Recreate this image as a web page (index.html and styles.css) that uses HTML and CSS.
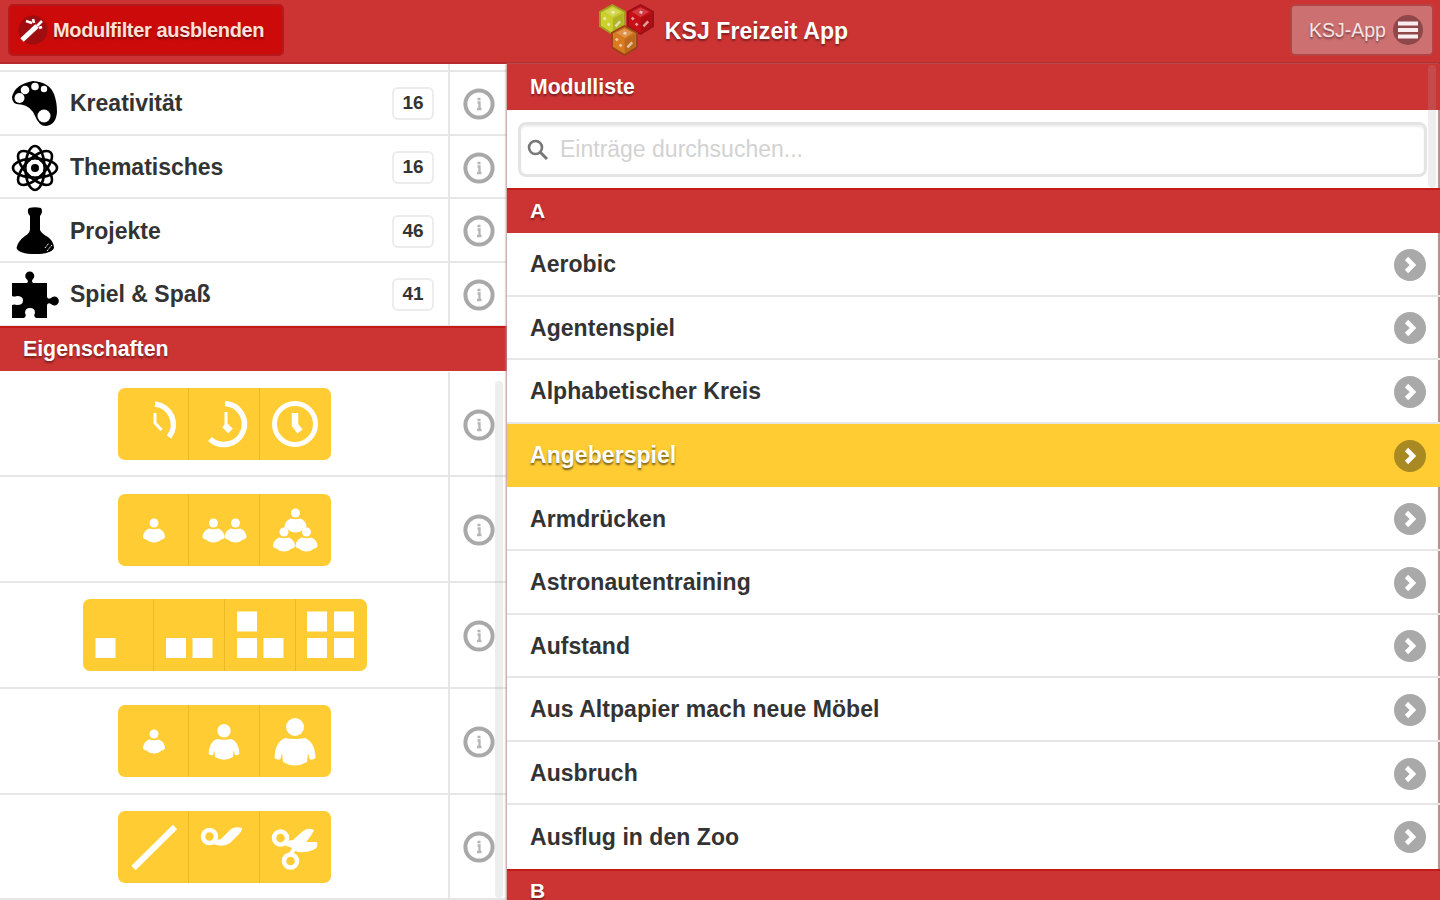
FILE: index.html
```html
<!DOCTYPE html>
<html lang="de">
<head>
    <meta charset="UTF-8">
    <meta name="viewport" content="width=device-width, initial-scale=1.0">
    <title>KSJ Freizeit App</title>
    <link rel="stylesheet" href="styles.css">
</head>
<body>
    <svg class="defs" width="0" height="0">
        <symbol id="info" viewBox="0 0 32 32">
            <circle cx="16" cy="16" r="13.600" fill="#fff" stroke="#a9a9a9" stroke-width="4"/>
            <path d="M14.500 11h3M14.500 14.500h2v6M14 21h4.500" fill="none" stroke="#b5b5b5" stroke-width="2.300"/>
        </symbol>
        <symbol id="arrow" viewBox="0 0 32 32">
            <circle cx="16" cy="16" r="16"/>
            <path d="M12.500 9.500l6.500 6.500-6.500 6.500" fill="none" stroke="#fff" stroke-width="4.600"/>
        </symbol>
        <symbol id="person" viewBox="0 0 24 26">
            <circle cx="12" cy="5" r="4.500"/>
            <path d="M7 10.500Q12 12 17 10.500Q22.500 13 23 18.500Q23 21 19.500 21.500Q16.500 24.500 12 24.500Q7.500 24.500 4.500 21.500Q1 21 1 18.500Q1.500 13 7 10.500z"/>
        </symbol>
        <symbol id="adult" viewBox="0 0 42 48">
            <circle cx="21" cy="9" r="9"/>
            <path d="M11 20Q21 22 31 20Q41 24 41.500 40Q38 43 35.500 41L34 35L33 44Q21 51 9 44L8 35L6.500 41Q4 43 .5 40Q1 24 11 20z"/>
        </symbol>
        <symbol id="die" viewBox="0 0 30 32">
            <path d="M15 1l13 7v15l-13 8-13-8V8z" stroke-width="2"/>
            <path d="M15 3l10 5-10 6-10-6z" fill="#fff" opacity=".18"/>
            <path d="M15 15l12-7v15l-12 7z" fill="#000" opacity=".13"/>
            <path d="M14 8l3 1M6 14l2 2M10 20l2 2M18 23l5-5" fill="none" stroke="#fff" stroke-width="2.600" opacity=".6"/>
        </symbol>
    </svg>

    <header class="topbar">
        <button class="btn btn-filter">
            <svg width="30" height="30" viewBox="0 0 30 30"><circle cx="15" cy="15" r="14.500" fill="#a00d10"/><path d="M4 25L19 11" stroke="#fff" stroke-width="5"/><path d="M19 11l5-5M8 6l6 2M15 4l1 4M24 12l-3 1" stroke="#fff" stroke-width="2.600"/></svg>
            <span>Modulfilter ausblenden</span>
        </button>
        <div class="brand">
            <svg width="58" height="54" viewBox="0 0 58 54">
                <use href="#die" x="28" y="0" width="29" height="31" fill="#c90f16" stroke="#9b1218"/>
                <use href="#die" x="0" y="0" width="29" height="31" fill="#cbd02a" stroke="#a29a20"/>
                <use href="#die" x="12" y="21" width="29" height="31" fill="#d97a1f" stroke="#994416"/>
            </svg>
            <h1>KSJ Freizeit App</h1>
        </div>
        <button class="btn btn-app">
            <span>KSJ-App</span>
            <svg width="30" height="30" viewBox="0 0 30 30"><circle cx="15" cy="15" r="15" fill="#90474a"/><path d="M5 8.500h20M5 15h20M5 21.500h20" stroke="#f8eeee" stroke-width="4"/></svg>
        </button>
    </header>

    <main class="columns">
        <section class="filter">
            <div class="row row-cut"><div class="cell"></div><div class="info"></div></div>
            <div class="row">
                <div class="cell">
                    <svg class="icon" viewBox="0 0 48 48"><path d="M22 1Q38 2 43 14Q46 22 46 32Q45 45 35 46Q28 46 24 36Q20 26 10 24.500Q1 25 1 17Q4 4 22 1z"/><g fill="#fff"><circle cx="8.500" cy="18" r="5"/><circle cx="14" cy="10" r="4.300"/><circle cx="24" cy="6.500" r="3.800"/><circle cx="33" cy="9" r="3.200"/><circle cx="33" cy="36" r="6.500"/></g></svg>
                    <span class="name">Kreativität</span><span class="count">16</span>
                </div>
                <div class="info"><svg><use href="#info"/></svg></div>
            </div>
            <div class="row">
                <div class="cell">
                    <svg class="icon" viewBox="0 0 48 48"><g fill="none" stroke="#000" stroke-width="2.600"><ellipse cx="24" cy="24" rx="22" ry="9.500"/><ellipse cx="24" cy="24" rx="22" ry="9.500" transform="rotate(45 24 24)"/><ellipse cx="24" cy="24" rx="22" ry="9.500" transform="rotate(90 24 24)"/><ellipse cx="24" cy="24" rx="22" ry="9.500" transform="rotate(135 24 24)"/></g><circle cx="24" cy="24" r="8.300" fill="#fff"/><circle cx="24" cy="24" r="4"/></svg>
                    <span class="name">Thematisches</span><span class="count">16</span>
                </div>
                <div class="info"><svg><use href="#info"/></svg></div>
            </div>
            <div class="row">
                <div class="cell">
                    <svg class="icon" viewBox="0 0 48 48"><path d="M18 1Q24-.5 30 1Q32 4 30 7.500L29 9V23Q31 27 37 30Q43 35 43 41Q40 47 24 47Q8 47 5.500 41Q7 34 14 29Q19 26 19 22V9L17.500 7Q16 3 18 1z"/><path d="M36 44l5-6M34 41l4-5" stroke="#fff" stroke-width="1" stroke-dasharray="2 1"/></svg>
                    <span class="name">Projekte</span><span class="count">46</span>
                </div>
                <div class="info"><svg><use href="#info"/></svg></div>
            </div>
            <div class="row">
                <div class="cell">
                    <svg class="icon" viewBox="0 0 48 48"><path d="M1 12H16Q18 10 15.500 8A4.500 4.500 0 1 1 22 8Q20 10 22 12H36V26Q37 29 40 27A4.500 4.500 0 1 1 40 33Q37 31 36 34V47H25Q22 45 24 42Q24 37 19 37Q14 37 14 42Q16 45 13 47H1V34Q3 33 6 34Q12 34 12 29.500Q12 25 6 25Q3 26 1 25z"/></svg>
                    <span class="name">Spiel &amp; Spaß</span><span class="count">41</span>
                </div>
                <div class="info"><svg><use href="#info"/></svg></div>
            </div>
            <h2 class="divider">Eigenschaften</h2>

            <div class="properties">
                <div class="row">
                    <div class="cell">
                        <div class="group">
                            <button><svg class="line" viewBox="0 0 71 72"><path d="M37 16A20.500 20.500 0 0 1 51 49" stroke-width="5.500"/><path d="M37 25V35L43.500 42" stroke-width="3"/></svg></button>
                            <button><svg class="line" viewBox="0 0 71 72"><path d="M36 15.500A20.500 20.500 0 1 1 21 51" stroke-width="5.500"/><path d="M37 24V39" stroke-width="3"/><path d="M35.500 37l6 6" stroke-width="6.500"/></svg></button>
                            <button><svg class="line" viewBox="0 0 71 72"><circle cx="35" cy="36" r="20.500" stroke-width="5"/><path d="M35 25V37L40 43.500" stroke-width="6.500"/></svg></button>
                        </div>
                    </div>
                    <div class="info"><svg><use href="#info"/></svg></div>
                </div>
                <div class="row">
                    <div class="cell">
                        <div class="group">
                            <button><svg viewBox="0 0 71 72"><use href="#person" x="24" y="24" width="24" height="26"/></svg></button>
                            <button><svg viewBox="0 0 71 72"><use href="#person" x="12.500" y="24" width="24" height="26"/><use href="#person" x="34.500" y="24" width="24" height="26"/></svg></button>
                            <button><svg viewBox="0 0 71 72"><use href="#person" x="23" y="14" width="25" height="26"/><use href="#person" x="12" y="33" width="24" height="26"/><use href="#person" x="34.500" y="33" width="24" height="26"/></svg></button>
                        </div>
                    </div>
                    <div class="info"><svg><use href="#info"/></svg></div>
                </div>
                <div class="row">
                    <div class="cell">
                        <div class="group">
                            <button><svg viewBox="0 0 71 72"><path d="M12.500 39h20v20h-20z"/></svg></button>
                            <button><svg viewBox="0 0 71 72"><path d="M12 39h20v20h-20zM38.500 39h20v20h-20z"/></svg></button>
                            <button><svg viewBox="0 0 71 72"><path d="M12 12.500h20v20h-20zM12 39h20v20h-20zM38.500 39h20v20h-20z"/></svg></button>
                            <button><svg viewBox="0 0 71 72"><path d="M11 12.500h20v20h-20zM38 12.500h20v20h-20zM11 39h20v20h-20zM38 39h20v20h-20z"/></svg></button>
                        </div>
                    </div>
                    <div class="info"><svg><use href="#info"/></svg></div>
                </div>
                <div class="row">
                    <div class="cell">
                        <div class="group">
                            <button><svg viewBox="0 0 71 72"><use href="#person" x="24" y="24" width="24" height="26"/></svg></button>
                            <button><svg viewBox="0 0 71 72"><use href="#adult" x="19" y="19" width="32" height="36"/></svg></button>
                            <button><svg viewBox="0 0 71 72"><use href="#adult" x="14" y="13" width="42" height="48"/></svg></button>
                        </div>
                    </div>
                    <div class="info"><svg><use href="#info"/></svg></div>
                </div>
                <div class="row">
                    <div class="cell">
                        <div class="group">
                            <button><svg class="line" viewBox="0 0 71 72"><path d="M15.500 57L57 16" stroke-width="6"/></svg></button>
                            <button><svg viewBox="0 0 71 72"><circle cx="20.500" cy="25.500" r="6.500" fill="none" stroke="#fff" stroke-width="4.500"/><path d="M24 30L32 28L42 18Q46 15 53 17Q53 21 48 25L41 32Q34 37 24 33z"/></svg></button>
                            <button><svg viewBox="0 0 71 72"><g fill="none" stroke="#fff" stroke-width="4.500"><circle cx="20.500" cy="27" r="6.500"/><circle cx="30.500" cy="50" r="6.500"/></g><path d="M25 30L33 29L43 20Q49 16 54 19Q52 24 46 31L57 31Q59 36 53 39Q43 43 35 40L32 46L28 44L32 37L24 34z"/></svg></button>
                        </div>
                    </div>
                    <div class="info"><svg><use href="#info"/></svg></div>
                </div>
                <div class="scrollbar"></div>
            </div>
        </section>

        <section class="modules">
            <h2 class="divider divider-first">Modulliste</h2>
            <div class="search">
                <label class="search-box">
                    <svg width="22" height="22" viewBox="0 0 22 22"><circle cx="8.500" cy="8.500" r="6.500" fill="none" stroke="#777" stroke-width="2.600"/><path d="M13 13l7 7" stroke="#777" stroke-width="3"/></svg>
                    <input type="text" placeholder="Einträge durchsuchen...">
                </label>
            </div>
            <h2 class="divider">A</h2>
            <ul class="list">
                <li><span>Aerobic</span><svg><use href="#arrow"/></svg></li>
                <li><span>Agentenspiel</span><svg><use href="#arrow"/></svg></li>
                <li><span>Alphabetischer Kreis</span><svg><use href="#arrow"/></svg></li>
                <li class="active"><span>Angeberspiel</span><svg><use href="#arrow"/></svg></li>
                <li><span>Armdrücken</span><svg><use href="#arrow"/></svg></li>
                <li><span>Astronautentraining</span><svg><use href="#arrow"/></svg></li>
                <li><span>Aufstand</span><svg><use href="#arrow"/></svg></li>
                <li><span>Aus Altpapier mach neue Möbel</span><svg><use href="#arrow"/></svg></li>
                <li><span>Ausbruch</span><svg><use href="#arrow"/></svg></li>
                <li><span>Ausflug in den Zoo</span><svg><use href="#arrow"/></svg></li>
            </ul>
            <h2 class="divider divider-last">B</h2>
            <div class="scrollbar"></div>
        </section>
    </main>
</body>
</html>
```
FILE: styles.css
```css
:root {
    --red: #cc3333;
    --yellow: #ffcc33;
    --line: #e6e6e6;
}

* {
    box-sizing: border-box;
}

body {
    margin: 0;
    height: 900px;
    overflow: hidden;
    display: flex;
    flex-direction: column;
    font-family: "Liberation Sans", Arial, sans-serif;
    font-weight: bold;
    font-size: 23px;
    color: #333;
    background: #fff;
}

.defs {
    position: absolute;
}

svg {
    display: block;
    flex: none;
}

button {
    font: inherit;
    border: none;
    padding: 0;
}

/* Kopfzeile */
.topbar {
    flex: none;
    height: 64px;
    padding: 4px 6px 0 8px;
    display: grid;
    grid-template-columns: 1fr auto 1fr;
    align-items: start;
    background: var(--red);
    border-bottom: 2px solid #b52a2b;
}

.btn {
    height: 52px;
    display: flex;
    align-items: center;
    border-radius: 5px;
    font-size: 20px;
    color: #fff;
    text-shadow: 0 2px 2px rgba(0, 0, 0, 0.4);
}

.btn-filter {
    width: 276px;
    gap: 5px;
    padding-left: 8px;
    background: #cc0a0a;
    border: 2px solid #b51b1c;
    color: #ffe0d8;
    white-space: nowrap;
    letter-spacing: -0.35px;
}

.brand {
    display: flex;
    align-items: center;
    gap: 9px;
    margin-left: 4px;
}

.brand h1 {
    margin: 0;
    font-size: 23px;
    letter-spacing: 0.1px;
    color: #fff;
    text-shadow: 0 2px 2px rgba(0, 0, 0, 0.4);
}

.btn-app {
    justify-self: end;
    width: 144px;
    padding-left: 17px;
    gap: 7px;
    background: #cc7072;
    border: 2px solid #b34344;
    color: #f8e4e0;
    font-size: 19.5px;
    font-weight: normal;
    white-space: nowrap;
}

.columns {
    flex: 1;
    min-height: 0;
    display: grid;
    grid-template-columns: 507px 1fr;
}

.divider {
    margin: 0;
    height: 45px;
    padding-left: 23px;
    background: var(--red);
    border-top: 2px solid #c51a1a;
    color: #fff;
    font-size: 21px;
    line-height: 42px;
    text-shadow: 0 2px 2px rgba(0, 0, 0, 0.4);
}

/* Linke Spalte */
.filter {
    overflow: hidden;
}

.filter .divider {
    margin-top: -1px;
    font-size: 21.3px;
}

.row {
    height: 63.7px;
    display: flex;
    border-bottom: 2px solid var(--line);
}

.row-cut {
    height: 8px;
}

.cell {
    width: 448px;
    display: flex;
    align-items: center;
    padding: 2px 14px 0 11px;
}

.info {
    flex: 1;
    display: flex;
    align-items: center;
    border-left: 2px solid var(--line);
    padding: 2px 0 0 13px;
}

.info svg {
    width: 32px;
    height: 32px;
}

.icon {
    width: 48px;
    height: 48px;
    margin-right: 11px;
}

.name {
    flex: 1;
}

.count {
    width: 42px;
    height: 33px;
    border: 2px solid #ececec;
    border-radius: 6px;
    font-size: 19px;
    line-height: 28px;
    text-align: center;
}

.properties {
    position: relative;
    padding-top: 1px;
}

.properties .row {
    height: 105.7px;
}

.properties .cell {
    justify-content: center;
    padding: 1px 0 0 1px;
}

.group {
    display: flex;
    border-radius: 7px;
    overflow: hidden;
    background: var(--yellow);
}

.group button {
    width: 71px;
    height: 72px;
    background: none;
    border-right: 1px solid #ecba26;
}

.group button:last-child {
    border-right: none;
}

.group svg {
    width: 71px;
    height: 72px;
    fill: #fff;
}

.group .line {
    fill: none;
    stroke: #fff;
}

.scrollbar {
    position: absolute;
    width: 8px;
    background: rgba(170, 170, 170, 0.2);
    border-radius: 4px;
}

.filter .scrollbar {
    left: 495px;
    top: 10px;
    height: 517px;
}

/* Rechte Spalte */
.modules {
    position: relative;
    overflow: hidden;
    box-shadow: -1px 0 2px #b98c8c, inset -2px 0 1px #b98c8c;
}

.divider-first {
    height: 46px;
    border-top: none;
    line-height: 46px;
    font-size: 21.2px;
}

.divider-last {
    height: 31px;
    line-height: 40px;
}

.search {
    height: 78px;
    padding: 12px 13px 11px 11px;
}

.search-box {
    height: 55px;
    display: flex;
    align-items: center;
    gap: 11px;
    padding-left: 6px;
    border: 3px solid #e4e4e4;
    border-radius: 8px;
    box-shadow: inset 0 2px 2px #eee;
}

.search-box input {
    flex: 1;
    border: none;
    outline: none;
    padding: 0;
    background: none;
    font-family: inherit;
    font-size: 23px;
}

.search-box input::placeholder {
    color: #d2d2d2;
}

.list {
    margin: 0;
    padding: 0;
    list-style: none;
}

.list li {
    height: 63.6px;
    display: flex;
    align-items: center;
    justify-content: space-between;
    padding: 2px 14px 0 23px;
    border-bottom: 2px solid var(--line);
}

.list li:last-child {
    border-bottom: none;
    padding-top: 0;
}

.list span {
    letter-spacing: 0.05px;
}

.list svg {
    width: 32px;
    height: 32px;
    fill: #a9a9a9;
}

.list .active {
    background: var(--yellow);
    border-color: var(--yellow);
    color: #fff;
    text-shadow: 0 2px 2px rgba(0, 0, 0, 0.55);
}

.active svg {
    fill: #a98a22;
}

.modules .scrollbar {
    right: 4px;
    top: 1px;
    height: 123px;
}
```
